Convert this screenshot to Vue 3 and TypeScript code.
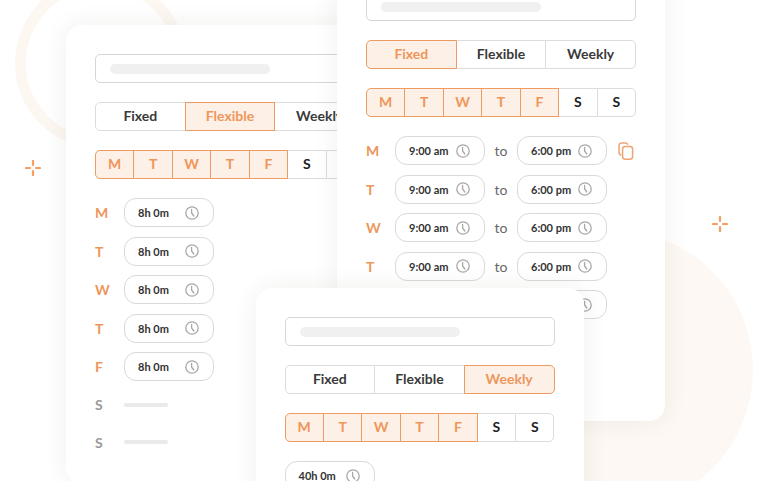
<script setup lang="ts">
type Tab = 'Fixed' | 'Flexible' | 'Weekly'

interface Row {
  day: string
  off?: boolean
  from?: string
  until?: string
  copy?: boolean
}

interface Card {
  id: string
  active: Tab
  rows: Row[]
}

const tabs: Tab[] = ['Fixed', 'Flexible', 'Weekly']
const days = ['M', 'T', 'W', 'T', 'F', 'S', 'S']

const cards: Card[] = [
  {
    id: 'flexible',
    active: 'Flexible',
    rows: [
      { day: 'M', from: '8h 0m' },
      { day: 'T', from: '8h 0m' },
      { day: 'W', from: '8h 0m' },
      { day: 'T', from: '8h 0m' },
      { day: 'F', from: '8h 0m' },
      { day: 'S', off: true },
      { day: 'S', off: true }
    ]
  },
  {
    id: 'fixed',
    active: 'Fixed',
    rows: [
      { day: 'M', from: '9:00 am', until: '6:00 pm', copy: true },
      { day: 'T', from: '9:00 am', until: '6:00 pm' },
      { day: 'W', from: '9:00 am', until: '6:00 pm' },
      { day: 'T', from: '9:00 am', until: '6:00 pm' },
      { day: 'F', from: '9:00 am', until: '6:00 pm' }
    ]
  },
  {
    id: 'weekly',
    active: 'Weekly',
    rows: [{ day: '', from: '40h 0m' }]
  }
]
</script>

<template>
  <div class="page">
    <div class="ring"></div>
    <div class="blob"></div>

    <svg class="spark spark-left" viewBox="0 0 16 16" width="16" height="16">
      <path d="M8 1v4M8 11v4M1 8h4M11 8h4" />
    </svg>
    <svg class="spark spark-right" viewBox="0 0 16 16" width="16" height="16">
      <path d="M8 1v4M8 11v4M1 8h4M11 8h4" />
    </svg>

    <section v-for="card in cards" :key="card.id" class="card" :class="`card--${card.id}`">
      <div class="name-field"><span class="name-line"></span></div>

      <div class="segments">
        <div
          v-for="tab in tabs"
          :key="tab"
          class="segment"
          :class="{ 'is-active': tab === card.active }"
        >
          {{ tab }}
        </div>
      </div>

      <div class="segments segments--days">
        <div
          v-for="(day, i) in days"
          :key="i"
          class="segment"
          :class="{ 'is-active': i < 5 }"
        >
          {{ day }}
        </div>
      </div>

      <div class="rows">
        <div v-for="(row, i) in card.rows" :key="i" class="row" :class="{ 'row--off': row.off }">
          <span v-if="row.day" class="row-day">{{ row.day }}</span>
          <span v-if="row.off" class="off-line"></span>
          <template v-else>
            <div class="pill">
              <span>{{ row.from }}</span>
              <svg class="clock" viewBox="0 0 14 14" width="14" height="14">
                <circle cx="7" cy="7" r="6.2" />
                <path d="M6.6 3.4v3.6l2.2 3" />
              </svg>
            </div>
            <template v-if="row.until">
              <span class="to">to</span>
              <div class="pill">
                <span>{{ row.until }}</span>
                <svg class="clock" viewBox="0 0 14 14" width="14" height="14">
                  <circle cx="7" cy="7" r="6.2" />
                  <path d="M6.6 3.4v3.6l2.2 3" />
                </svg>
              </div>
            </template>
            <svg v-if="row.copy" class="copy" viewBox="0 0 16 18" width="16" height="18">
              <path d="M3.4 13.2C2 12.9 1 11.8 1 10.4V3.6C1 2.2 2.2 1 3.6 1h3.6c1.2 0 2.2.7 2.6 1.8" />
              <rect x="4.6" y="4.4" width="10" height="12.8" rx="2.6" />
            </svg>
          </template>
        </div>
      </div>
    </section>
  </div>
</template>

<style>
html,
body {
  margin: 0;
  background: #fff;
}
</style>

<style scoped>
.page {
  position: relative;
  width: 768px;
  height: 481px;
  overflow: hidden;
  background: #fff;
  font-family: Lato, 'Open Sans', sans-serif;
  color: #333;
}

.ring {
  position: absolute;
  left: 15px;
  top: -23px;
  width: 172px;
  height: 172px;
  box-sizing: border-box;
  border: 11px solid #fdf7f2;
  border-radius: 50%;
}

.blob {
  position: absolute;
  left: 473px;
  top: 230px;
  width: 280px;
  height: 280px;
  border-radius: 50%;
  background: #fdf8f3;
}

.spark {
  position: absolute;
  fill: none;
  stroke: #f79d62;
  stroke-width: 2.2;
  stroke-linecap: round;
}

.spark-left {
  left: 24.5px;
  top: 159.5px;
}

.spark-right {
  left: 712px;
  top: 216px;
}

.card {
  position: absolute;
  box-sizing: border-box;
  width: 328px;
  padding: 29px;
  background: #fff;
  border-radius: 16px;
  box-shadow: 0 0 26px rgba(60, 40, 20, 0.07);
}

.card--flexible {
  left: 66px;
  top: 25px;
  height: 458px;
}

.card--fixed {
  left: 337px;
  top: -37px;
  height: 458px;
}

.card--weekly {
  left: 255.5px;
  top: 288px;
  height: 240px;
}

.name-field {
  display: flex;
  align-items: center;
  box-sizing: border-box;
  width: 270px;
  height: 29px;
  padding: 0 14px;
  border: 1px solid #d6d6d6;
  border-radius: 5px;
}

.name-line {
  width: 160px;
  height: 10px;
  border-radius: 5px;
  background: #f0f0f0;
}

.segments {
  display: flex;
  width: 270px;
  height: 29px;
  margin-top: 19px;
}

.segment {
  position: relative;
  flex: 1;
  display: flex;
  align-items: center;
  justify-content: center;
  box-sizing: border-box;
  min-width: 0;
  margin-left: -1px;
  padding-bottom: 2px;
  border: 1px solid #dcdcdc;
  background: #fff;
  font-size: 14px;
  font-weight: 700;
  color: #3a3a3a;
}

.segments--days .segment {
  color: #222;
}

.segment:first-child {
  margin-left: 0;
  border-radius: 5px 0 0 5px;
}

.segment:last-child {
  border-radius: 0 5px 5px 0;
}

.segment.is-active,
.segments--days .segment.is-active {
  z-index: 1;
  border-color: #ee9c64;
  background: #fdf0e6;
  color: #ee965b;
}

.rows {
  display: flex;
  flex-direction: column;
  gap: 9.5px;
  margin-top: 19px;
}

.row {
  display: flex;
  align-items: center;
  height: 29px;
}

.row--off {
  height: 28px;
}

.row-day {
  width: 29px;
  font-size: 14px;
  font-weight: 700;
  color: #ee965b;
}

.row--off .row-day {
  color: #9a9a9a;
}

.off-line {
  width: 44px;
  height: 4px;
  border-radius: 2px;
  background: #eaeaea;
}

.pill {
  display: flex;
  align-items: center;
  justify-content: space-between;
  box-sizing: border-box;
  width: 90px;
  height: 29px;
  padding: 0 14px 0 13px;
  border: 1px solid #d9d9d9;
  border-radius: 12px;
  font-size: 11px;
  font-weight: 700;
  color: #333;
}

.clock {
  fill: none;
  stroke: #a8a8a8;
  stroke-width: 1.3;
  stroke-linecap: round;
  stroke-linejoin: round;
}

.to {
  width: 32px;
  text-align: center;
  font-size: 14px;
  color: #666;
}

.copy {
  margin-left: 11px;
  fill: none;
  stroke: #eda472;
  stroke-width: 1.5;
}
</style>
